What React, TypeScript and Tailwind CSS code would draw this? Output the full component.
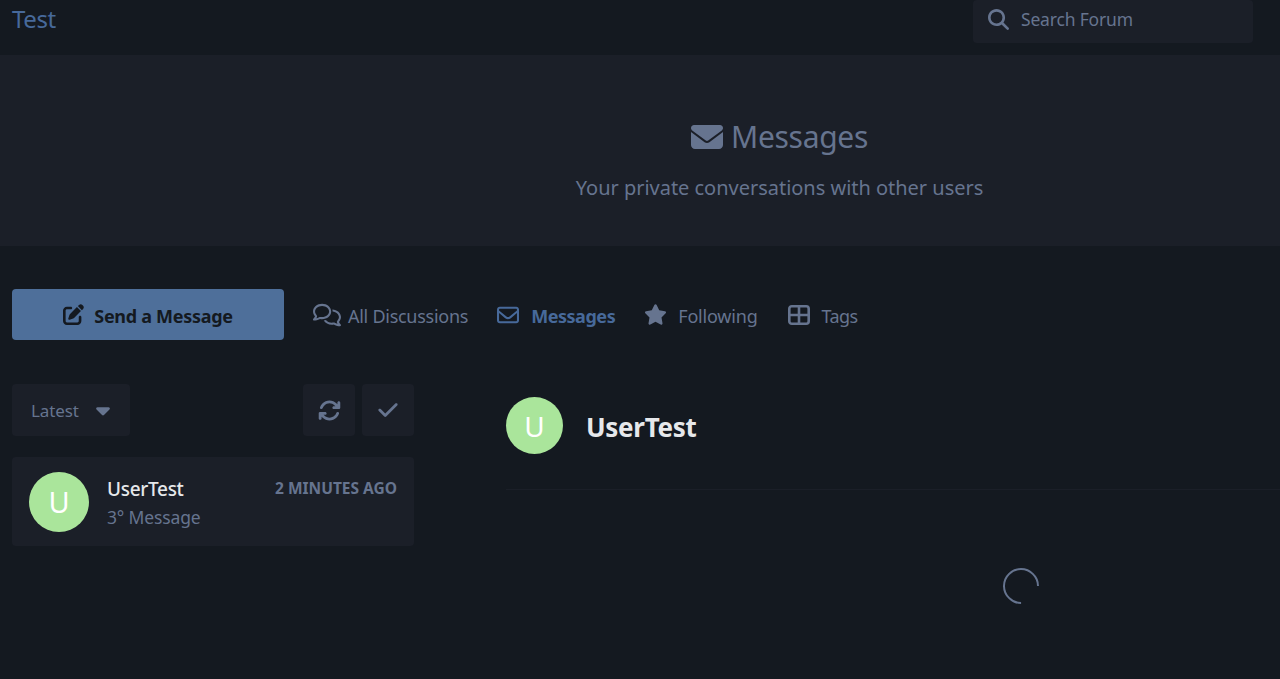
import { FaArrowsRotate, FaCaretDown, FaCheck, FaEnvelope, FaMagnifyingGlass, FaPenToSquare, FaRegComments, FaRegEnvelope, FaStar } from "react-icons/fa6"

function TagsIcon() {
  return (
    <svg width="22" height="20" viewBox="0 0 22 20" fill="none" stroke="currentColor" strokeWidth="2.6">
      <rect x="1.3" y="1.3" width="19.4" height="17.4" rx="2.5" />
      <path d="M11 1.3v17.4M1.3 10h19.4" />
    </svg>
  )
}

function Avatar({ size, text }: { size: string; text: string }) {
  return (
    <div className={`${size} ${text} shrink-0 rounded-full bg-[#aae59b] flex items-center justify-center text-white`}>
      U
    </div>
  )
}

export default function App() {
  return (
    <div className="h-[679px] overflow-hidden bg-[#141920] font-['Noto_Sans',sans-serif] text-[#66748f]">
      <header className="h-[55px] flex items-start justify-between pl-3 pr-[27px]">
        <a className="text-[24px] leading-[38px] text-[#47699a] tracking-[-0.4px]">Test</a>
        <div className="w-[280px] h-[43px] bg-[#1b1f28] rounded flex items-center pl-[15px] gap-[12px]">
          <FaMagnifyingGlass className="text-[21px] text-[#66748f] -mt-[5px]" />
          <span className="text-[17.5px] leading-[38px] -mt-[5px] tracking-[-0.18px]">Search Forum</span>
        </div>
      </header>

      <section className="h-[191px] bg-[#1b1f28] flex flex-col items-center pl-[279px] pt-[62px]">
        <h1 className="flex items-center gap-2 text-[30px] leading-10 tracking-[-0.3px]">
          <FaEnvelope className="text-[32px] text-[#66748f]" />
          Messages
        </h1>
        <p className="mt-[17px] text-[20px] leading-7 tracking-[-0.02px]">Your private conversations with other users</p>
      </section>

      <div className="flex items-center mt-[43px] pl-3">
        <button className="w-[272px] h-[51px] rounded bg-[#4e6f9a] text-[#141920] flex items-center justify-center gap-[10px] font-bold text-[18px] leading-[30px] tracking-[-0.3px]">
          <FaPenToSquare className="text-[21px]" />
          <span className="pt-[2px]">Send a Message</span>
        </button>
        <nav className="flex items-center ml-[29px] text-[18px] leading-[30px] tracking-[-0.2px]">
          <a className="flex items-center gap-[7px]">
            <FaRegComments className="text-[28px]" />
            <span className="pt-[2px] tracking-[-0.27px]">All Discussions</span>
          </a>
          <a className="flex items-center gap-[12px] ml-[29px] font-bold text-[#47699a]">
            <FaRegEnvelope className="text-[22px]" />
            <span className="pt-[2px] tracking-[-0.45px]">Messages</span>
          </a>
          <a className="flex items-center gap-[11px] ml-[29px]">
            <FaStar className="text-[23px]" />
            <span className="pt-[2px]">Following</span>
          </a>
          <a className="flex items-center gap-[12px] ml-[30px]">
            <TagsIcon />
            <span className="pt-[2px] tracking-[-0.6px]">Tags</span>
          </a>
        </nav>
      </div>

      <div className="flex mt-[44px] pl-3">
        <aside className="w-[402px] shrink-0">
          <div className="flex gap-[7px]">
            <button className="w-[118px] h-[52px] rounded bg-[#1b1f28] flex items-center pl-[19px] gap-[17px] text-[17px] tracking-[-0.1px]">
              <span className="pt-[2px]">Latest</span>
              <FaCaretDown className="text-[22px] -ml-[4px]" />
            </button>
            <button className="ml-auto w-[52px] h-[52px] rounded bg-[#1b1f28] flex items-center justify-center">
              <FaArrowsRotate className="text-[23px]" />
            </button>
            <button className="w-[52px] h-[52px] rounded bg-[#1b1f28] flex items-center justify-center">
              <FaCheck className="text-[22px]" />
            </button>
          </div>
          <div className="mt-[21px] h-[89px] rounded bg-[#1b1f28] flex items-center px-[17px]">
            <Avatar size="w-[60px] h-[60px]" text="text-[29px]" />
            <div className="ml-[18px] flex-1 pt-[2px]">
              <div className="flex items-center justify-between">
                <span className="text-[19px] leading-[26px] font-medium text-[#e6e8eb] tracking-[-0.3px]">UserTest</span>
                <span className="text-[15.5px] font-bold tracking-[0px] uppercase">2 minutes ago</span>
              </div>
              <p className="mt-[3px] text-[17.5px] leading-6 tracking-[-0.15px]">3° Message</p>
            </div>
          </div>
        </aside>

        <main className="flex-1 min-w-0 ml-[92px]">
          <div className="h-[106px] border-b border-[#1b1f28] flex items-start pt-[13px]">
            <Avatar size="w-[57px] h-[57px]" text="text-[28px]" />
            <h2 className="ml-[23px] text-[26px] leading-[61px] font-bold text-[#e6e8eb] tracking-[-0.3px]">UserTest</h2>
          </div>
          <div className="flex justify-center pt-[78px] pl-[256px]">
            <div className="w-[36px] h-[36px] rounded-full border-[2.5px] border-[#66748f] border-t-transparent rotate-[135deg]" />
          </div>
        </main>
      </div>
    </div>
  )
}
